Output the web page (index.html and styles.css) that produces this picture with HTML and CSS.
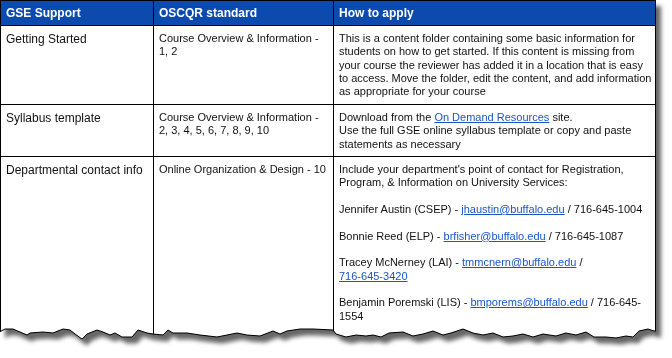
FILE: index.html
```html
<!DOCTYPE html>
<html lang="en">
<head>
<meta charset="utf-8">
<title>GSE Support</title>
<link rel="stylesheet" href="styles.css">
</head>
<body>
<div class="page">
  <div class="shadow">
    <div class="paper">
      <div class="sheet">
        <div class="th">GSE Support</div>
        <div class="th">OSCQR standard</div>
        <div class="th">How to apply</div>

        <div class="td name">Getting Started</div>
        <div class="td std">Course Overview &amp; Information - 1, 2</div>
        <div class="td how">
          <p>This is a content folder containing some basic information for students on how to get started. If this content is missing from your course the reviewer has added it in a location that is easy to access. Move the folder, edit the content, and add information as appropriate for your course</p>
        </div>

        <div class="td name">Syllabus template</div>
        <div class="td std">Course Overview &amp; Information - 2, 3, 4, 5, 6, 7, 8, 9, 10</div>
        <div class="td how">
          <p>Download from the <a href="#">On Demand Resources</a> site.<br>Use the full GSE online syllabus template or copy and paste statements as necessary</p>
        </div>

        <div class="td name">Departmental contact info</div>
        <div class="td std">Online Organization &amp; Design - 10</div>
        <div class="td how">
          <p>Include your department's point of contact for Registration, Program, &amp; Information on University Services:</p>
          <p>Jennifer Austin (CSEP) - <a href="#">jhaustin@buffalo.edu</a> / 716-645-1004</p>
          <p>Bonnie Reed (ELP) - <a href="#">brfisher@buffalo.edu</a> / 716-645-1087</p>
          <p>Tracey McNerney (LAI) - <a href="#">tmmcnern@buffalo.edu</a> / <a href="#" class="nowrap">716-645-3420</a></p>
          <p>Benjamin Poremski (LIS) - <a href="#">bmporems@buffalo.edu</a> / 716-645-1554</p>
        </div>
      </div>
    </div>
    <svg class="tear" width="658" height="358" viewBox="0 0 658 358">
      <polyline points="0,331.7 5,329 13,329 20,332 27,335 30,333 43,332 53,333 63,329 70,330 75,334 82,339 87,334 97,330 103,332 110,335 115,333 122,337 132,337 138,330 147,333 153,334 163,335 168,330 173,333 187,333 200,335 217,337 227,335 237,333 247,335 260,336 273,331 280,334 287,331 300,329 313,329 333,330 336,334 346,337 356,335 366,336 373,335 381,337 389,333 403,332 413,336 423,334 433,331 443,335 451,333 463,329 473,333 483,335 493,333 503,337 513,336 523,334 533,337 543,334 556,336 566,333 576,335 586,332 594,337 606,337 616,338 626,336 633,337 639,331 648,329 654,331 656,331" />
    </svg>
  </div>
</div>
</body>
</html>
```

FILE: styles.css
```css
html, body {
  margin: 0;
  padding: 0;
  background: #ffffff;
}

.page {
  width: 672px;
  height: 358px;
  overflow: hidden;
  font-family: "Liberation Sans", Arial, sans-serif;
  color: #111;
}

.shadow {
  position: relative;
  width: 656px;
  filter: drop-shadow(5px 6px 2px rgba(0, 0, 0, 0.6));
}

.paper {
  clip-path: polygon(0 0, 656px 0, 656px 331px, 654px 331px, 648px 329px, 639px 331px, 633px 337px, 626px 336px, 616px 338px, 606px 337px, 594px 337px, 586px 332px, 576px 335px, 566px 333px, 556px 336px, 543px 334px, 533px 337px, 523px 334px, 513px 336px, 503px 337px, 493px 333px, 483px 335px, 473px 333px, 463px 329px, 451px 333px, 443px 335px, 433px 331px, 423px 334px, 413px 336px, 403px 332px, 389px 333px, 381px 337px, 373px 335px, 366px 336px, 356px 335px, 346px 337px, 336px 334px, 333px 330px, 313px 329px, 300px 329px, 287px 331px, 280px 334px, 273px 331px, 260px 336px, 247px 335px, 237px 333px, 227px 335px, 217px 337px, 200px 335px, 187px 333px, 173px 333px, 168px 330px, 163px 335px, 153px 334px, 147px 333px, 138px 330px, 132px 337px, 122px 337px, 115px 333px, 110px 335px, 103px 332px, 97px 330px, 87px 334px, 82px 339px, 75px 334px, 70px 330px, 63px 329px, 53px 333px, 43px 332px, 30px 333px, 27px 335px, 20px 332px, 13px 329px, 5px 329px, 0 331.7px);
}

.sheet {
  display: grid;
  grid-template-columns: 152px 179px 321px;
  grid-template-rows: 24px 78px 51px 1fr;
  gap: 1px;
  height: 348px;
  border: 1px solid #000;
  background: #000;
}

.th {
  background: #0c4aad;
  color: #fff;
  font-weight: bold;
  font-size: 12px;
  line-height: 14px;
  padding: 5px 5px 0;
}

.td {
  background: #fff;
  padding: 6px 5px 0;
}

.name {
  font-size: 12px;
  line-height: 14.5px;
}

.std, .how {
  font-size: 11px;
  line-height: 13.33px;
}

.how {
  padding-right: 2px;
}

.how p {
  margin: 0 0 13.33px;
}

a {
  color: #1a56c8;
  text-decoration: underline;
}

.nowrap {
  white-space: nowrap;
}

.tear {
  position: absolute;
  left: 0;
  top: 0;
  pointer-events: none;
}

.tear polyline {
  fill: none;
  stroke: #000;
  stroke-width: 1;
}
```
